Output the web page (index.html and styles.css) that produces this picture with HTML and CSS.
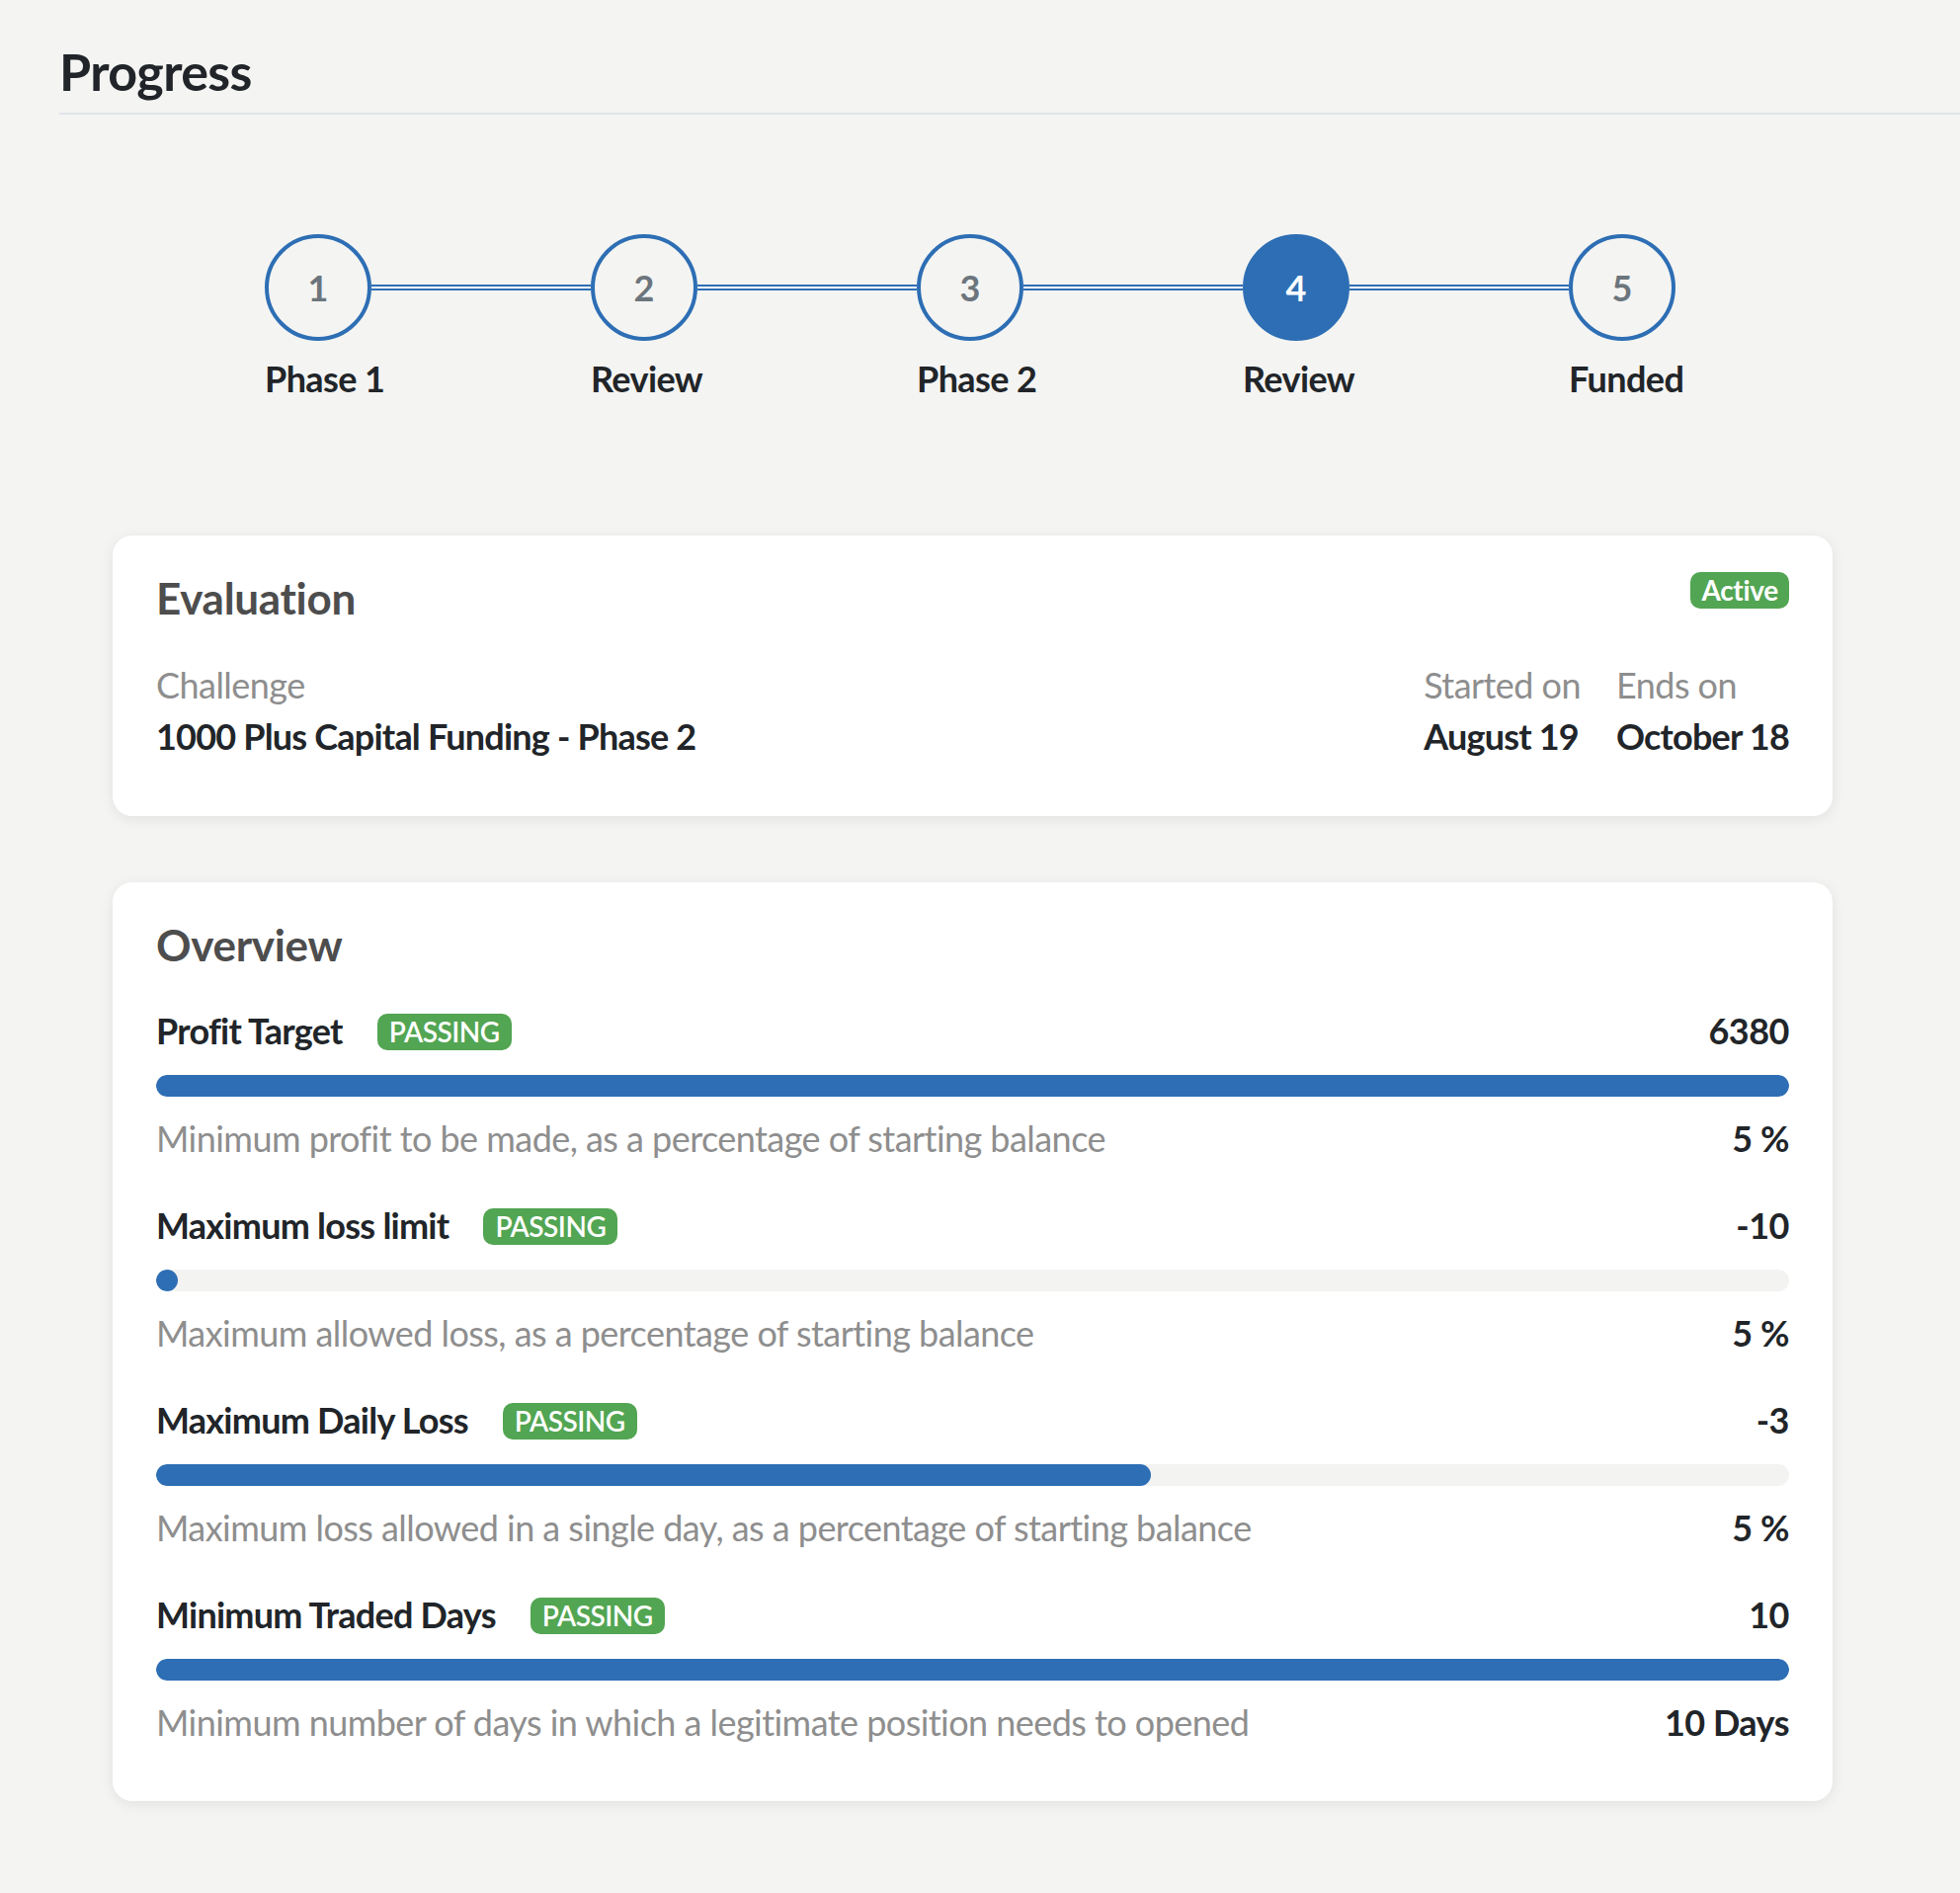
FILE: index.html
```html
<!DOCTYPE html>
<html lang="en">
<head>
<meta charset="utf-8">
<title>Progress</title>
<link rel="stylesheet" href="styles.css">
</head>
<body>
<div class="page">
  <header class="page-header">
    <h1 class="page-title">Progress</h1>
  </header>
  <main class="content">
    <div class="stepper">
      <div class="step-circle">1</div>
      <div class="step-line"></div>
      <div class="step-circle">2</div>
      <div class="step-line"></div>
      <div class="step-circle">3</div>
      <div class="step-line"></div>
      <div class="step-circle is-active">4</div>
      <div class="step-line"></div>
      <div class="step-circle">5</div>
      <div class="step-label">Phase 1</div>
      <div class="step-label col-3">Review</div>
      <div class="step-label col-5">Phase 2</div>
      <div class="step-label col-7">Review</div>
      <div class="step-label col-9">Funded</div>
    </div>

    <section class="card eval-card">
      <div class="card-head">
        <h2 class="card-title">Evaluation</h2>
        <span class="badge">Active</span>
      </div>
      <div class="eval-meta">
        <div class="meta-item">
          <div class="meta-label">Challenge</div>
          <div class="meta-value">1000 Plus Capital Funding - Phase 2</div>
        </div>
        <div class="meta-dates">
          <div class="meta-item">
            <div class="meta-label">Started on</div>
            <div class="meta-value">August 19</div>
          </div>
          <div class="meta-item">
            <div class="meta-label">Ends on</div>
            <div class="meta-value">October 18</div>
          </div>
        </div>
      </div>
    </section>

    <section class="card overview-card">
      <h2 class="card-title">Overview</h2>
      <div class="metric">
        <div class="metric-head">
          <div class="metric-name">Profit Target <span class="badge badge-pass">PASSING</span></div>
          <div class="metric-value">6380</div>
        </div>
        <div class="bar"><div class="bar-fill" style="width:100%"></div></div>
        <div class="metric-foot">
          <div class="metric-desc">Minimum profit to be made, as a percentage of starting balance</div>
          <div class="metric-value">5 %</div>
        </div>
      </div>
      <div class="metric">
        <div class="metric-head">
          <div class="metric-name">Maximum loss limit <span class="badge badge-pass">PASSING</span></div>
          <div class="metric-value">-10</div>
        </div>
        <div class="bar"><div class="bar-fill" style="width:1.35%"></div></div>
        <div class="metric-foot">
          <div class="metric-desc">Maximum allowed loss, as a percentage of starting balance</div>
          <div class="metric-value">5 %</div>
        </div>
      </div>
      <div class="metric">
        <div class="metric-head">
          <div class="metric-name">Maximum Daily Loss <span class="badge badge-pass">PASSING</span></div>
          <div class="metric-value">-3</div>
        </div>
        <div class="bar"><div class="bar-fill" style="width:60.9%"></div></div>
        <div class="metric-foot">
          <div class="metric-desc">Maximum loss allowed in a single day, as a percentage of starting balance</div>
          <div class="metric-value">5 %</div>
        </div>
      </div>
      <div class="metric">
        <div class="metric-head">
          <div class="metric-name">Minimum Traded Days <span class="badge badge-pass">PASSING</span></div>
          <div class="metric-value">10</div>
        </div>
        <div class="bar"><div class="bar-fill" style="width:100%"></div></div>
        <div class="metric-foot">
          <div class="metric-desc">Minimum number of days in which a legitimate position needs to opened</div>
          <div class="metric-value">10 Days</div>
        </div>
      </div>
    </section>
  </main>
</div>
</body>
</html>
```

FILE: styles.css
```css
* { box-sizing: border-box; }

body {
  margin: 0;
  background: #f4f4f2;
  font-family: Lato, "Open Sans", "Liberation Sans", sans-serif;
  color: #212529;
}

.page {
  padding-left: 60px;
  padding-bottom: 80px;
}

.page-header {
  padding-top: 41px;
  padding-bottom: 11px;
  border-bottom: 2px solid #e0e3e8;
}

.page-title {
  margin: 0;
  font-size: 52px;
  line-height: 62px;
  font-weight: 700;
  letter-spacing: -0.6px;
  color: #212529;
}

.content {
  margin-left: 54px;
  width: 1741px;
}

/* Stepper */
.stepper {
  margin-top: 121px;
  margin-bottom: 137px;
  padding-left: 154px;
  display: grid;
  grid-template-columns: 108px 222px 108px 222px 108px 222px 108px 222px 108px;
  grid-template-rows: 108px auto;
  justify-content: start;
}

.step-circle {
  width: 108px;
  height: 108px;
  border: 4px solid #2d6eb4;
  border-radius: 50%;
  display: flex;
  align-items: center;
  justify-content: center;
  font-size: 36px;
  font-weight: 700;
  color: #6c757d;
}

.step-circle.is-active {
  background: #2d6eb4;
  color: #fff;
}

.step-line {
  align-self: center;
  height: 6px;
  border-top: 2px solid #2d6eb4;
  border-bottom: 2px solid #2d6eb4;
  background: #ffffff;
}

.step-label {
  grid-row: 2;
  grid-column: 1;
  justify-self: start;
  white-space: nowrap;
  margin-top: 16px;
  font-size: 36px;
  line-height: 44px;
  font-weight: 700;
  letter-spacing: -0.6px;
  color: #212529;
}
.step-label.col-3 { grid-column: 3; }
.step-label.col-5 { grid-column: 5; }
.step-label.col-7 { grid-column: 7; }
.step-label.col-9 { grid-column: 9; }

/* Cards */
.card {
  background: #ffffff;
  border-radius: 20px;
  box-shadow: 0 3px 14px rgba(0, 0, 0, 0.08);
  padding: 37px 44px 59px;
}

.card + .card {
  margin-top: 67px;
}

.card-head {
  display: flex;
  justify-content: space-between;
  align-items: flex-start;
}

.card-title {
  margin: 0;
  font-size: 44px;
  line-height: 53px;
  font-weight: 700;
  letter-spacing: -0.3px;
  color: #4d4d4d;
}

.badge {
  display: inline-block;
  height: 37px;
  line-height: 37px;
  padding: 0 11px;
  border-radius: 10px;
  background: #52a552;
  color: #ffffff;
  font-size: 28px;
  font-weight: 700;
  letter-spacing: -0.3px;
}

.badge-pass {
  font-weight: 600;
  letter-spacing: -0.5px;
  padding: 0 12px;
  margin-left: 27px;
  vertical-align: 2px;
}

.eval-meta {
  margin-top: 39px;
  display: flex;
  justify-content: space-between;
  align-items: flex-end;
}

.meta-dates {
  display: flex;
  gap: 36px;
}

.meta-label {
  font-size: 36px;
  line-height: 44px;
  letter-spacing: -0.55px;
  color: #8e8e8e;
}

.meta-value {
  margin-top: 8px;
  font-size: 36px;
  line-height: 44px;
  font-weight: 700;
  letter-spacing: -0.8px;
  color: #212529;
}

/* Overview metrics */
.overview-card {
  padding-bottom: 58px;
}

.metric {
  margin-top: 44px;
}

.overview-card .card-title + .metric {
  margin-top: 38px;
}

.metric-head,
.metric-foot {
  display: flex;
  justify-content: space-between;
  align-items: center;
  font-size: 36px;
  line-height: 44px;
}

.metric-name {
  font-weight: 700;
  letter-spacing: -0.75px;
  color: #212529;
}

.metric-value {
  font-weight: 700;
  letter-spacing: -0.5px;
  color: #212529;
}

.bar {
  margin-top: 23px;
  height: 22px;
  border-radius: 11px;
  background: #f3f3f2;
  overflow: hidden;
}

.bar-fill {
  height: 100%;
  border-radius: 11px;
  background: #2d6eb4;
}

.metric-foot {
  margin-top: 20px;
}

.metric-desc {
  letter-spacing: -0.55px;
  color: #8e8e8e;
}
```
